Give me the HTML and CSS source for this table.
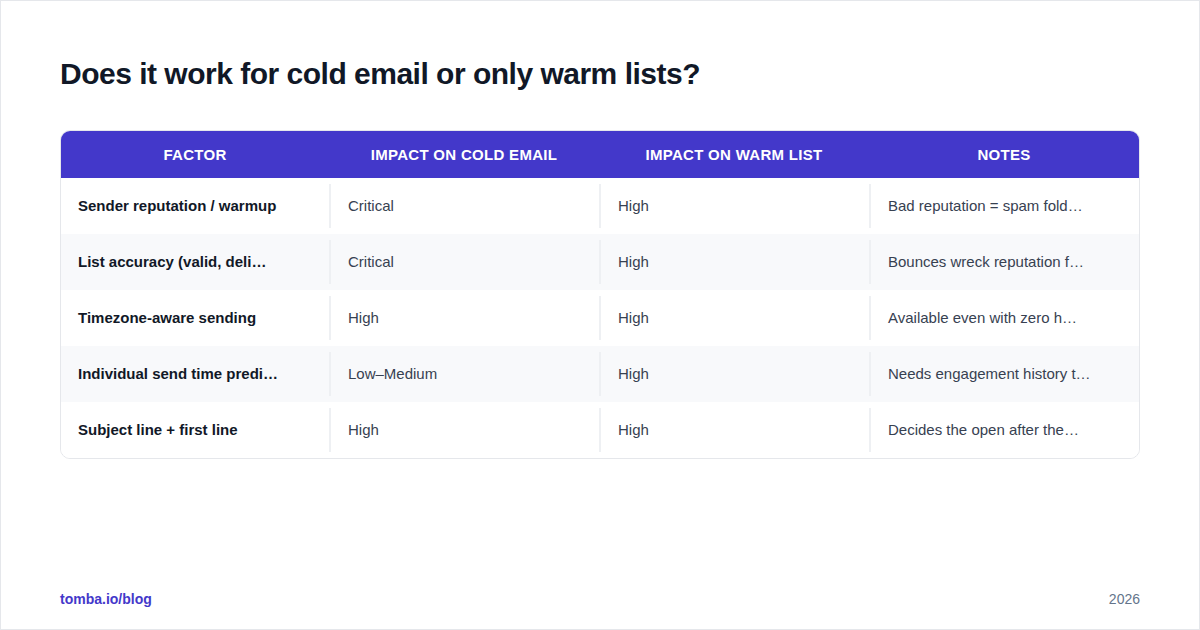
FILE: index.html
```html
<!DOCTYPE html>
<html lang="en">
<head>
<meta charset="utf-8">
<title>Does it work for cold email or only warm lists?</title>
<link rel="stylesheet" href="styles.css">
</head>
<body>
<div class="page">
  <h1 class="title">Does it work for cold email or only warm lists?</h1>
  <div class="table">
    <div class="row head">
      <div class="cell">FACTOR</div>
      <div class="cell">IMPACT ON COLD EMAIL</div>
      <div class="cell">IMPACT ON WARM LIST</div>
      <div class="cell">NOTES</div>
    </div>
    <div class="row">
      <div class="cell factor">Sender reputation / warmup</div>
      <div class="cell"><span class="val">Critical</span></div>
      <div class="cell"><span class="val">High</span></div>
      <div class="cell"><span class="val">Bad reputation = spam fold…</span></div>
    </div>
    <div class="row alt">
      <div class="cell factor">List accuracy (valid, deli…</div>
      <div class="cell"><span class="val">Critical</span></div>
      <div class="cell"><span class="val">High</span></div>
      <div class="cell"><span class="val">Bounces wreck reputation f…</span></div>
    </div>
    <div class="row">
      <div class="cell factor">Timezone-aware sending</div>
      <div class="cell"><span class="val">High</span></div>
      <div class="cell"><span class="val">High</span></div>
      <div class="cell"><span class="val">Available even with zero h…</span></div>
    </div>
    <div class="row alt">
      <div class="cell factor">Individual send time predi…</div>
      <div class="cell"><span class="val">Low–Medium</span></div>
      <div class="cell"><span class="val">High</span></div>
      <div class="cell"><span class="val">Needs engagement history t…</span></div>
    </div>
    <div class="row">
      <div class="cell factor">Subject line + first line</div>
      <div class="cell"><span class="val">High</span></div>
      <div class="cell"><span class="val">High</span></div>
      <div class="cell"><span class="val">Decides the open after the…</span></div>
    </div>
  </div>
  <div class="footer">
    <span class="brand">tomba.io/blog</span>
    <span class="year">2026</span>
  </div>
</div>
</body>
</html>
```

FILE: styles.css
```css
* { box-sizing: border-box; }
html, body { margin: 0; padding: 0; }
body {
  width: 1200px;
  height: 630px;
  background: #ffffff;
  font-family: "Liberation Sans", Arial, sans-serif;
}
.page {
  width: 1200px;
  height: 630px;
  border: 1px solid #e5e7eb;
  padding: 54px 59px 20px 59px;
  display: flex;
  flex-direction: column;
}
.title {
  margin: 0;
  font-size: 30px;
  line-height: 38px;
  font-weight: 700;
  color: #111827;
  letter-spacing: -0.5px;
}
.table {
  margin-top: 37px;
  border: 1px solid #e5e7eb;
  border-radius: 10px;
  overflow: hidden;
}
.row {
  display: grid;
  grid-template-columns: 268px 270px 270px 1fr;
  height: 56px;
  align-items: center;
  background: #ffffff;
}
.row.alt { background: #f8f9fb; }
.row.head {
  height: 48px;
  margin-top: -1px;
  background: #4338ca;
}
.head .cell {
  justify-content: center;
  color: #ffffff;
  font-size: 15px;
  font-weight: 700;
  letter-spacing: 0.3px;
  padding: 0;
}
.cell {
  font-size: 15px;
  line-height: 17px;
  color: #374151;
  white-space: nowrap;
  height: 44px;
  display: flex;
  align-items: center;
  padding-left: 18px;
  padding-bottom: 1px;
}
.row:not(.head) .cell + .cell {
  border-left: 2px solid #eef0f3;
  padding-left: 17px;
}
.cell.factor {
  font-weight: 700;
  color: #111827;
  padding-left: 17px;
}
.footer {
  margin-top: auto;
  display: flex;
  justify-content: space-between;
  align-items: center;
  height: 18px;
  margin-bottom: 1px;
}
.brand {
  color: #4338ca;
  font-weight: 700;
  font-size: 14px;
}
.year {
  color: #64748b;
  font-size: 14px;
}
```
